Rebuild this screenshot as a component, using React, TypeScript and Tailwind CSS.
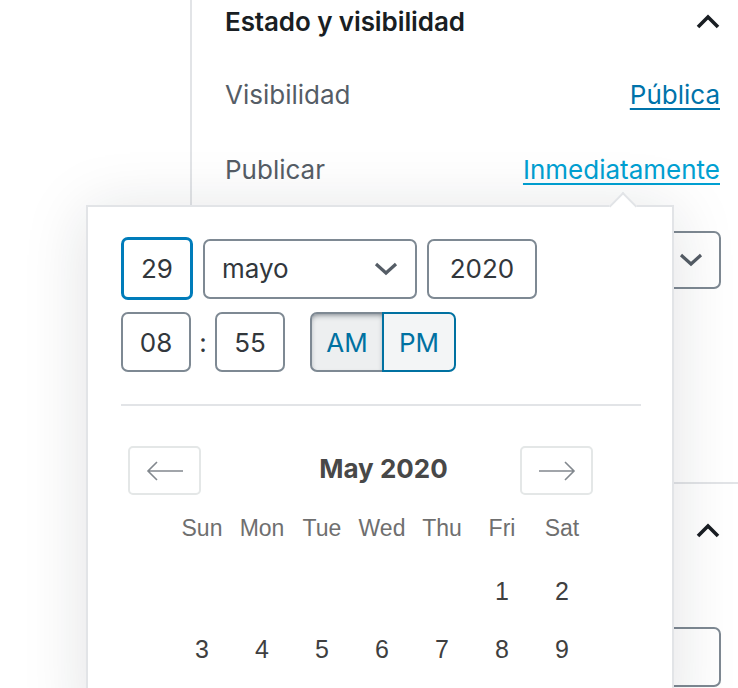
import React from 'react'

const weekdays = ['Sun', 'Mon', 'Tue', 'Wed', 'Thu', 'Fri', 'Sat']
const weeks: (number | null)[][] = [
  [null, null, null, null, null, 1, 2],
  [3, 4, 5, 6, 7, 8, 9],
]

function ChevronUp() {
  return (
    <svg width="26" height="16" viewBox="0 0 26 16" fill="none">
      <polyline points="3,14 13,4 23,14" stroke="#191e23" strokeWidth="3.6" />
    </svg>
  )
}

function ChevronDown({ color = '#555d66' }: { color?: string }) {
  return (
    <svg width="24" height="14" viewBox="0 0 24 14" fill="none">
      <polyline points="2,2 12,11 22,2" stroke={color} strokeWidth="3.2" />
    </svg>
  )
}

function Arrow({ dir }: { dir: 'left' | 'right' }) {
  return (
    <svg width="40" height="22" viewBox="0 0 40 22" fill="none"
      className={dir === 'right' ? 'rotate-180' : ''}>
      <path d="M38 11H3M12 2l-9 9 9 9" stroke="#82888e" strokeWidth="1.6" />
    </svg>
  )
}

export default function App() {
  return (
    <div className="relative w-[738px] h-[688px] overflow-hidden bg-white font-['Inter','Noto_Sans',sans-serif]">
      {/* sidebar behind the popover */}
      <div className="ml-[190px] h-full border-l-2 border-[#e2e4e7] flex flex-col">
        <div className="pl-[33px] pr-[17px]">
          <div className="h-[42px] flex items-center justify-between">
            <h2 className="text-[26px] font-semibold text-[#191e23] tracking-[-0.1px]">Estado y visibilidad</h2>
            <ChevronUp />
          </div>
          <div className="mt-[28px] h-[48px] flex items-center justify-between text-[26px]">
            <span className="text-[#555d66]">Visibilidad</span>
            <a className="mr-[1px] text-[#0073aa] underline decoration-2 underline-offset-[4px]">Pública</a>
          </div>
          <div className="mt-[27px] h-[48px] flex items-center justify-between text-[26px]">
            <span className="text-[#555d66]">Publicar</span>
            <a className="mr-[1px] text-[#00a0d2] underline decoration-2 underline-offset-[4px]">Inmediatamente</a>
          </div>
          <div className="mt-[38px] h-[58px] border-2 border-[#7e8993] rounded-[7px] flex items-center justify-end pr-[16px]">
            <ChevronDown />
          </div>
        </div>
        <div className="mt-[193px] border-t-2 border-[#e2e4e7]" />
        <div className="pl-[33px] pr-[17px]">
          <div className="h-[92px] flex items-center justify-end">
            <ChevronUp />
          </div>
          <div className="mt-[51px] h-[60px] border-2 border-[#7e8993] rounded-[7px]" />
        </div>
      </div>

      {/* date time popover */}
      <div className="absolute left-[86px] top-[205px] w-[588px] h-[520px] bg-white border-2 border-[#e2e4e7] shadow-[0_6px_60px_rgba(25,30,35,0.13)]">
        <div className="absolute left-[525px] top-[-11px] w-[20px] h-[20px] rotate-45 bg-white border-t-2 border-l-2 border-[#e2e4e7]" />

        <div className="pl-[33px] pt-[30px] text-[26px] text-[#32373c]">
          <div className="flex items-center gap-[10px]">
            <div className="w-[72px] h-[63px] rounded-[7px] border-[3px] border-[#007cba] flex items-center justify-center">29</div>
            <div className="w-[214px] h-[60px] rounded-[7px] border-2 border-[#7e8993] flex items-center justify-between pl-[17px] pr-[17px]">
              <span>mayo</span>
              <ChevronDown />
            </div>
            <div className="w-[110px] h-[60px] rounded-[7px] border-2 border-[#7e8993] flex items-center justify-center">2020</div>
          </div>

          <div className="mt-[12px] flex items-center">
            <div className="w-[70px] h-[60px] rounded-[7px] border-2 border-[#7e8993] flex items-center justify-center">08</div>
            <div className="w-[24px] text-center">:</div>
            <div className="w-[70px] h-[60px] rounded-[7px] border-2 border-[#7e8993] flex items-center justify-center">55</div>
            <div className="ml-[25px] flex h-[60px] text-[#0071a1]">
              <div className="w-[72px] rounded-l-[7px] border-2 border-r-0 border-[#7e8993] bg-[#edeff0] shadow-[inset_0_3px_6px_-3px_#555d66] flex items-center justify-center">AM</div>
              <div className="w-[74px] rounded-r-[7px] border-2 border-[#0071a1] bg-[#f3f5f6] flex items-center justify-center">PM</div>
            </div>
          </div>

          <div className="mt-[32px] w-[520px] h-[2px] bg-[#e2e4e7]" />

          <div className="mt-[40px] flex items-center">
            <div className="ml-[7px] w-[73px] h-[49px] rounded-[5px] border-2 border-[#e4e7e7] flex items-center justify-center">
              <Arrow dir="left" />
            </div>
            <div className="w-[319px] pl-[46px] pb-[5px] text-center font-bold text-[26px] text-[#484848]">May 2020</div>
            <div className="w-[73px] h-[49px] rounded-[5px] border-2 border-[#e4e7e7] flex items-center justify-center">
              <Arrow dir="right" />
            </div>
          </div>

          <div className="ml-[51px] w-[420px] font-['Liberation_Sans',Arial,sans-serif]">
            <div className="mt-[13px] grid grid-cols-7 h-[40px] items-center text-[23px] text-[#6f6f6f]">
              {weekdays.map(d => (
                <div key={d} className="text-center">{d}</div>
              ))}
            </div>
            <div className="mt-[15px]">
              {weeks.map((w, i) => (
                <div key={i} className="grid grid-cols-7 h-[58px] items-center text-[25px] text-[#3f3f3f]">
                  {w.map((d, j) => (
                    <div key={j} className="text-center">{d ?? ''}</div>
                  ))}
                </div>
              ))}
            </div>
          </div>
        </div>
      </div>
    </div>
  )
}
